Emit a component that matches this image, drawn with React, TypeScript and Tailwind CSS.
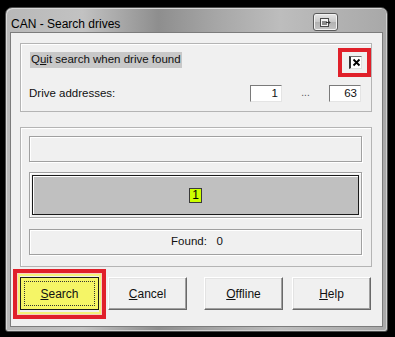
import React from "react";

function U({ c }: { c: string }) {
  return <span className="underline underline-offset-[1px]">{c}</span>;
}

function Btn({ children, w = "w-[79px]" }: { children: React.ReactNode; w?: string }) {
  return (
    <div
      className={`${w} h-[33px] flex items-center justify-center bg-[#f0f0f0] border border-t-[#ffffff] border-l-[#ffffff] border-b-[#696969] border-r-[#696969] shadow-[inset_-1px_-1px_0_#a0a0a0,inset_1px_1px_0_#e3e3e3] text-[12px] text-[#111]`}
    >
      {children}
    </div>
  );
}

function Sunken({ children, className = "" }: { children?: React.ReactNode; className?: string }) {
  return (
    <div
      className={`border border-t-[#a0a0a0] border-l-[#a0a0a0] border-b-[#a0a0a0] border-r-[#a0a0a0] shadow-[inset_1px_1px_0_#ffffff,1px_1px_0_#ffffff] ${className}`}
    >
      {children}
    </div>
  );
}

export default function App() {
  return (
    <div
      className="w-[395px] h-[337px] bg-black pt-[7px] pl-[5px] relative overflow-hidden"
      style={{ fontFamily: '"Liberation Sans", Arial, sans-serif' }}
    >
      <div className="w-[383px] h-[325px] rounded-t-[7px] rounded-b-[3px] border border-[#4c4c4c] bg-[linear-gradient(90deg,#b8b8b8_0%,#c2c2c2_20%,#8e8e8e_40%,#a6a6a6_55%,#bdbdbd_72%,#a8a8a8_100%)] flex flex-col shadow-[inset_1px_1px_0_#d8d8d8,inset_-1px_-1px_0_#d0d0d0]">
        {/* Title bar */}
        <div className="h-[25px] flex items-start justify-between">
          <span className="ml-[5px] mt-[9px] text-[12px] leading-[14px] text-black">CAN - Search drives</span>
          <div className="mr-[49px] mt-[5px] w-[25px] h-[18px] rounded-[3px] border border-[#5a5a5a] bg-[linear-gradient(180deg,#e6e6e6_0%,#c8c8c8_50%,#b2b2b2_51%,#c4c4c4_100%)] shadow-[inset_0_0_0_1px_#f2f2f2] flex items-center justify-center">
            <svg width="11" height="9" viewBox="0 0 11 9">
              <rect x="0.5" y="0.5" width="8" height="8" fill="#f4f4f4" stroke="#4a4a4a" />
              <rect x="2" y="3" width="5" height="4" fill="#8a8a8a" />
              <path d="M6 4.5h4M8.5 3l1.5 1.5L8.5 6" stroke="#333" fill="none" />
            </svg>
          </div>
        </div>

        {/* Client area */}
        <div className="mx-[5px] h-[293px] bg-[#f0f0f0] shadow-[0_0_0_1px_#7c7c7c] pl-[9px] pt-[10px] flex flex-col">
          {/* Group 1 */}
          <div className="w-[352px] h-[69px] border border-[#b4b4b4] shadow-[inset_1px_1px_0_#ffffff] pt-[8px] flex flex-col">
            <div className="h-[16px] flex items-center justify-between pl-[9px] pr-[9px]">
              <span className="bg-[#c8c8c8] h-[16px] px-[1px] flex items-center text-[11.5px] text-[#111]">
                Q<U c="u" />it search when drive found
              </span>
              <div className="mt-[4px] w-[13px] h-[13px] bg-white border-l-2 border-t border-l-[#303030] border-t-[#707070] border-r border-b border-r-[#e0e0e0] border-b-[#e0e0e0] flex items-center justify-center">
                <svg width="9" height="9" viewBox="0 0 9 9">
                  <path d="M1.5 1.5L7.5 7.5M7.5 1.5L1.5 7.5" stroke="#000" strokeWidth="1.8" />
                </svg>
              </div>
            </div>
            <div className="mt-[17px] h-[17px] flex items-center pl-[8px] pr-[10px]">
              <span className="text-[11.5px] text-[#111]">Drive addresses:</span>
              <div className="ml-auto w-[32px] h-[17px] bg-white border border-t-[#7a7a7a] border-l-[#7a7a7a] border-b-[#e4e4e4] border-r-[#e4e4e4] flex items-center justify-end pr-[3px] text-[11.5px] text-[#111]">
                1
              </div>
              <span className="w-[47px] text-center text-[10px] text-[#555] -mt-[2px]">...</span>
              <div className="w-[32px] h-[17px] bg-white border border-t-[#7a7a7a] border-l-[#7a7a7a] border-b-[#e4e4e4] border-r-[#e4e4e4] flex items-center justify-end pr-[3px] text-[11.5px] text-[#111]">
                63
              </div>
            </div>
          </div>

          {/* Group 2 */}
          <div className="mt-[15px] w-[352px] h-[140px] border border-[#b4b4b4] shadow-[inset_1px_1px_0_#ffffff] pl-[8px] pt-[8px] flex flex-col">
            <Sunken className="w-[333px] h-[26px]" />
            <Sunken className="mt-[10px] w-[333px] h-[46px] p-[2px]">
              <div className="w-full h-full border border-[#1a1a1a] bg-[#c0c0c0] shadow-[inset_1px_1px_0_#ffffff] flex items-center justify-center">
                <div className="w-[13px] h-[15px] bg-[#ccff00] border border-[#3a3a3a] flex items-center justify-center text-[12px] leading-none text-black">
                  1
                </div>
              </div>
            </Sunken>
            <Sunken className="mt-[11px] w-[333px] h-[26px] flex items-center justify-center text-[11.5px] text-[#111]">
              <span className="pl-[3px]">Found:&nbsp;&nbsp; 0</span>
            </Sunken>
          </div>

          {/* Buttons */}
          <div className="mt-[10px] w-[352px] flex">
            <div className="w-[79px] h-[33px] flex items-center justify-center bg-[#f5f566] border border-[#1a1a1a] text-[12px] text-[#111] relative">
              <div className="absolute inset-[3px] border border-dotted border-[#333]" />
              <span>
                <U c="S" />earch
              </span>
            </div>
            <div className="ml-[9px]">
              <Btn>
                <span>
                  <U c="C" />ancel
                </span>
              </Btn>
            </div>
            <div className="ml-[17px]">
              <Btn>
                <span>
                  <U c="O" />ffline
                </span>
              </Btn>
            </div>
            <div className="ml-[9px]">
              <Btn>
                <span>
                  <U c="H" />elp
                </span>
              </Btn>
            </div>
          </div>
        </div>
      </div>

      {/* Red annotation around checkbox */}
      <div className="absolute left-[338px] top-[48px] w-[33px] h-[29px] border-[4px] border-[#e0202a]" />
      {/* Red annotation around Search */}
      <div className="absolute left-[13px] top-[269px] w-[93px] h-[50px] border-[4px] border-[#e0202a] shadow-[inset_0_0_0_1px_#f7d0c0,inset_0_0_0_3px_#f3f37a]" />
    </div>
  );
}
